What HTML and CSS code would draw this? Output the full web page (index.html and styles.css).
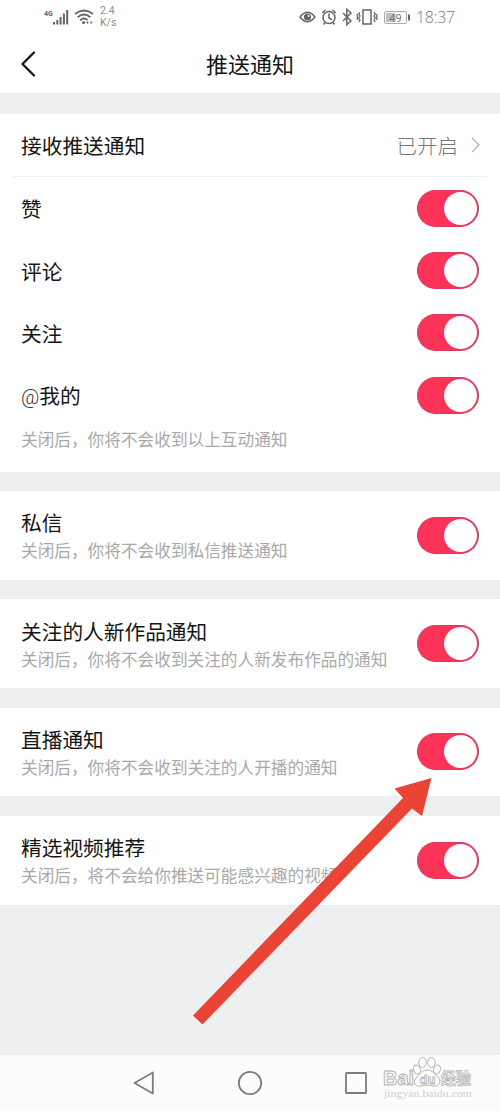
FILE: index.html
```html
<!DOCTYPE html>
<html lang="zh-CN">
<head>
<meta charset="utf-8">
<title>推送通知</title>
<link rel="stylesheet" href="styles.css">
</head>
<body>
<div class="phone">
  <div class="status">
    <svg class="signal" width="27" height="18" viewBox="0 0 27 18"><text x="1" y="8" class="gen">4G</text><path d="M11 14v2.500M14.300 12v4.500M17.600 9v7.500M20.900 5.500v11M24.200 2v14.500" stroke="#666" stroke-width="2"/></svg>
    <svg class="wifi" width="20" height="16" viewBox="0 0 20 16" fill="none" stroke="#666" stroke-width="1.9"><path d="M1 5Q10-2 19 5M3.6 8.2Q10 3 16.4 8.2M6.2 11.2Q10 8 13.5 11"/><circle cx="9.6" cy="13.5" r="1.6" fill="#666" stroke="none"/><path d="M12.2 13.500l2-1.700v3.400zM18.500 13.500l-2-1.700v3.400z" fill="#666" stroke="none"/></svg>
    <div class="speed"><span>2.4</span><span>K/s</span></div>
    <svg class="icons" width="122" height="20" viewBox="0 0 122 20" fill="none" stroke="#666" stroke-width="1.500">
      <path d="M1 10Q8.500 0.500 16 10Q8.500 19.500 1 10z"/><circle cx="8.500" cy="10" r="3.600" fill="#666" stroke="none"/><circle cx="9.600" cy="8.900" r="1" fill="#fff" stroke="none"/>
      <circle cx="30" cy="10.500" r="6"/><path d="M30 6.500v4.500l3 1.800M23.300 6l3-3M36.700 6l-3-3M26 15.500l-1.500 2M34 15.500l1.500 2"/>
      <path d="M44 6l8 8-4.200 3.700V2.300L52 6l-8 8"/>
      <path d="M64 3h8v14h-8z"/><path d="M61 5l-1.300 2 1.300 2-1.300 2 1.300 2-1.300 2M58.300 7v6M75 5l1.300 2-1.300 2 1.300 2-1.300 2 1.300 2M77.800 7v6" stroke-width="1.300"/>
      <rect x="85.500" y="4.500" width="22" height="12" rx="1.500" stroke="#aaa" stroke-width="1"/><rect x="87" y="6" width="9.500" height="9" fill="#c0c0c0" stroke="none"/><path d="M110 7.500v6" stroke-width="2"/><text x="96.500" y="14.700" class="battery">49</text>
    </svg>
    <span class="time">18:37</span>
  </div>
  <header class="header">
    <svg class="back" width="18" height="28" viewBox="0 0 18 28"><path d="M14 2.500L2.500 14 14 25.500" fill="none" stroke="#161616" stroke-width="2.300" stroke-linecap="round" stroke-linejoin="round"/></svg>
    <h1>推送通知</h1>
  </header>
  <main class="list">
    <section class="group main-group">
      <div class="row link"><span class="label">接收推送通知</span><span class="value">已开启</span><svg width="9" height="16" viewBox="0 0 9 16"><path d="M1 1l7 7-7 7" fill="none" stroke="#b3b3b3" stroke-width="1.300"/></svg></div>
      <div class="row"><span class="label">赞</span><i class="toggle"></i></div>
      <div class="row"><span class="label">评论</span><i class="toggle"></i></div>
      <div class="row"><span class="label">关注</span><i class="toggle"></i></div>
      <div class="row"><span class="label"><span class="at">@</span>我的</span><i class="toggle"></i></div>
      <p class="hint">关闭后，你将不会收到以上互动通知</p>
    </section>
    <section class="group item"><div class="copy"><span class="label">私信</span><span class="hint">关闭后，你将不会收到私信推送通知</span></div><i class="toggle"></i></section>
    <section class="group item"><div class="copy"><span class="label">关注的人新作品通知</span><span class="hint">关闭后，你将不会收到关注的人新发布作品的通知</span></div><i class="toggle"></i></section>
    <section class="group item"><div class="copy"><span class="label">直播通知</span><span class="hint">关闭后，你将不会收到关注的人开播的通知</span></div><i class="toggle"></i></section>
    <section class="group item"><div class="copy"><span class="label">精选视频推荐</span><span class="hint">关闭后，将不会给你推送可能感兴趣的视频</span></div><i class="toggle"></i></section>
  </main>
  <nav class="nav">
    <svg width="22" height="26" viewBox="0 0 22 26"><path d="M19.800 2.500v21L1.500 13z"/></svg>
    <svg width="26" height="26" viewBox="0 0 26 26"><circle cx="13" cy="13" r="11.200"/></svg>
    <svg width="24" height="26" viewBox="0 0 24 26"><rect x="2" y="3" width="20" height="20" rx=".5"/></svg>
  </nav>
  <svg class="arrow" width="240" height="249" viewBox="192 777 240 249"><path d="M431.500 778L394.500 788.500 403 798 193 1015.500 202.500 1024.500 412 808.500 422 816z" fill="#e94435"/></svg>
  <svg class="watermark" width="96" height="46" viewBox="380 1055 96 46">
    <g fill="#fdfdfd" stroke="#b4b4b4" stroke-width="1">
      <text x="383" y="1085" class="brand" textLength="31" lengthAdjust="spacingAndGlyphs">Bai</text>
      <path d="M427 1070C421 1070 420 1075 416 1078C412 1083 416 1087 421 1086Q427 1084 433 1086C439 1087 442 1082 438 1077C434 1074 433 1070 427 1070z"/>
      <ellipse cx="417" cy="1069.500" rx="3.300" ry="4.500" transform="rotate(-20 417 1069.500)"/><ellipse cx="422.500" cy="1062.500" rx="3.800" ry="5"/><ellipse cx="431.500" cy="1062.500" rx="3.800" ry="5"/><ellipse cx="437" cy="1069.500" rx="3.300" ry="4.500" transform="rotate(20 437 1069.500)"/>
      <text x="419.500" y="1083.500" class="du">du</text>
      <text x="441" y="1083.500" class="cn" textLength="30" lengthAdjust="spacingAndGlyphs">经验</text>
    </g>
    <text x="384" y="1097" class="site" textLength="88" lengthAdjust="spacingAndGlyphs">jingyan.baidu.com</text>
  </svg>
</div>
</body>
</html>
```
FILE: styles.css
```css
* { box-sizing: border-box; }
body { margin: 0; background: #fff; font-family: Roboto, "Noto Sans CJK SC", sans-serif; color: #151515; }
.phone { position: relative; width: 500px; height: 1111px; overflow: hidden; display: flex; flex-direction: column; }
.status { height: 35px; flex: none; display: flex; align-items: flex-start; padding: 0 45px 0 43px; }
.signal { margin-top: 8px; }
.wifi { margin: 9px 0 0 4px; }
.speed { display: flex; flex-direction: column; margin: 5px 0 0 6px; font-size: 10.5px; line-height: 12px; color: #8c8c8c; }
.gen { font: bold 7px Roboto, sans-serif; fill: #666; }
.icons { margin: 7px 0 0 auto; overflow: visible; }
.battery { font: 11px Roboto, sans-serif; fill: #777; stroke: none; text-anchor: middle; }
.time { font-family: "Open Sans", "Noto Sans", sans-serif; font-weight: 300; font-size: 16px; line-height: 35px; color: #777; width: 39px; margin-left: -5px; white-space: nowrap; letter-spacing: -.3px; }
.header { height: 58px; flex: none; display: flex; align-items: center; justify-content: center; }
.back { width: 18px; margin: 15px -38px 0 20px; align-self: flex-start; }
.header h1 { flex: 1; margin: 3px 0 0; text-align: center; font-size: 22px; line-height: 32px; font-weight: 400; }
.list { flex: 1; background: #eeeff1; padding-top: 21px; display: flex; flex-direction: column; gap: 19.5px; }
.group { background: #fff; flex: none; }
.main-group { height: 357.5px; }
.row { height: 62.4px; display: flex; align-items: center; justify-content: space-between; padding: 0 21px; }
.link { height: 63px; margin: 0 13px; padding: 0 7px 0 8px; border-bottom: 1px solid #efefef; }
.label { font-size: 20.7px; line-height: 28px; white-space: nowrap; }
.row .label { padding-top: 4px; }
.at { font-size: 20px; font-weight: 300; color: #333; }
.value { font-size: 20.5px; font-weight: 300; color: #777; margin: 0 13px 0 auto; }
.hint { margin: 0; font-size: 16.67px; line-height: 24px; color: #a9a9a9; font-weight: 400; white-space: nowrap; }
.main-group > .hint { padding: 0 21px; margin-top: 2px; }
.toggle { flex: none; width: 62px; height: 37px; border-radius: 19px; background: #fc3358; border: 1px solid #dd3b5d; border-right-color: #a95269; display: flex; justify-content: flex-end; align-items: center; }
.toggle::after { content: ""; width: 33px; height: 33px; border-radius: 50%; background: #fff; margin-right: 1px; }
.item { height: 88.8px; display: flex; align-items: center; justify-content: space-between; padding: 0 21px; }
.copy { display: flex; flex-direction: column; gap: 2px; padding-top: 4px; }
.nav { height: 56px; flex: none; background: #fcfcfc; display: flex; justify-content: space-between; align-items: center; padding: 0 132px 0 133px; }
.nav svg { fill: none; stroke: #7d7d7d; stroke-width: 1.8; stroke-linejoin: round; }
.arrow { position: absolute; left: 192px; top: 777px; }
.watermark { position: absolute; left: 380px; top: 1055px; }
.brand { font: bold 20px "Liberation Sans", sans-serif; }
.du { font: bold 13px "Liberation Sans", sans-serif; stroke-width: .8px; }
.cn { font: bold 16px "Noto Sans CJK SC", sans-serif; stroke-width: .8px; }
.site { font: 10px "Liberation Serif", serif; fill: #cfcfcf; }
```
